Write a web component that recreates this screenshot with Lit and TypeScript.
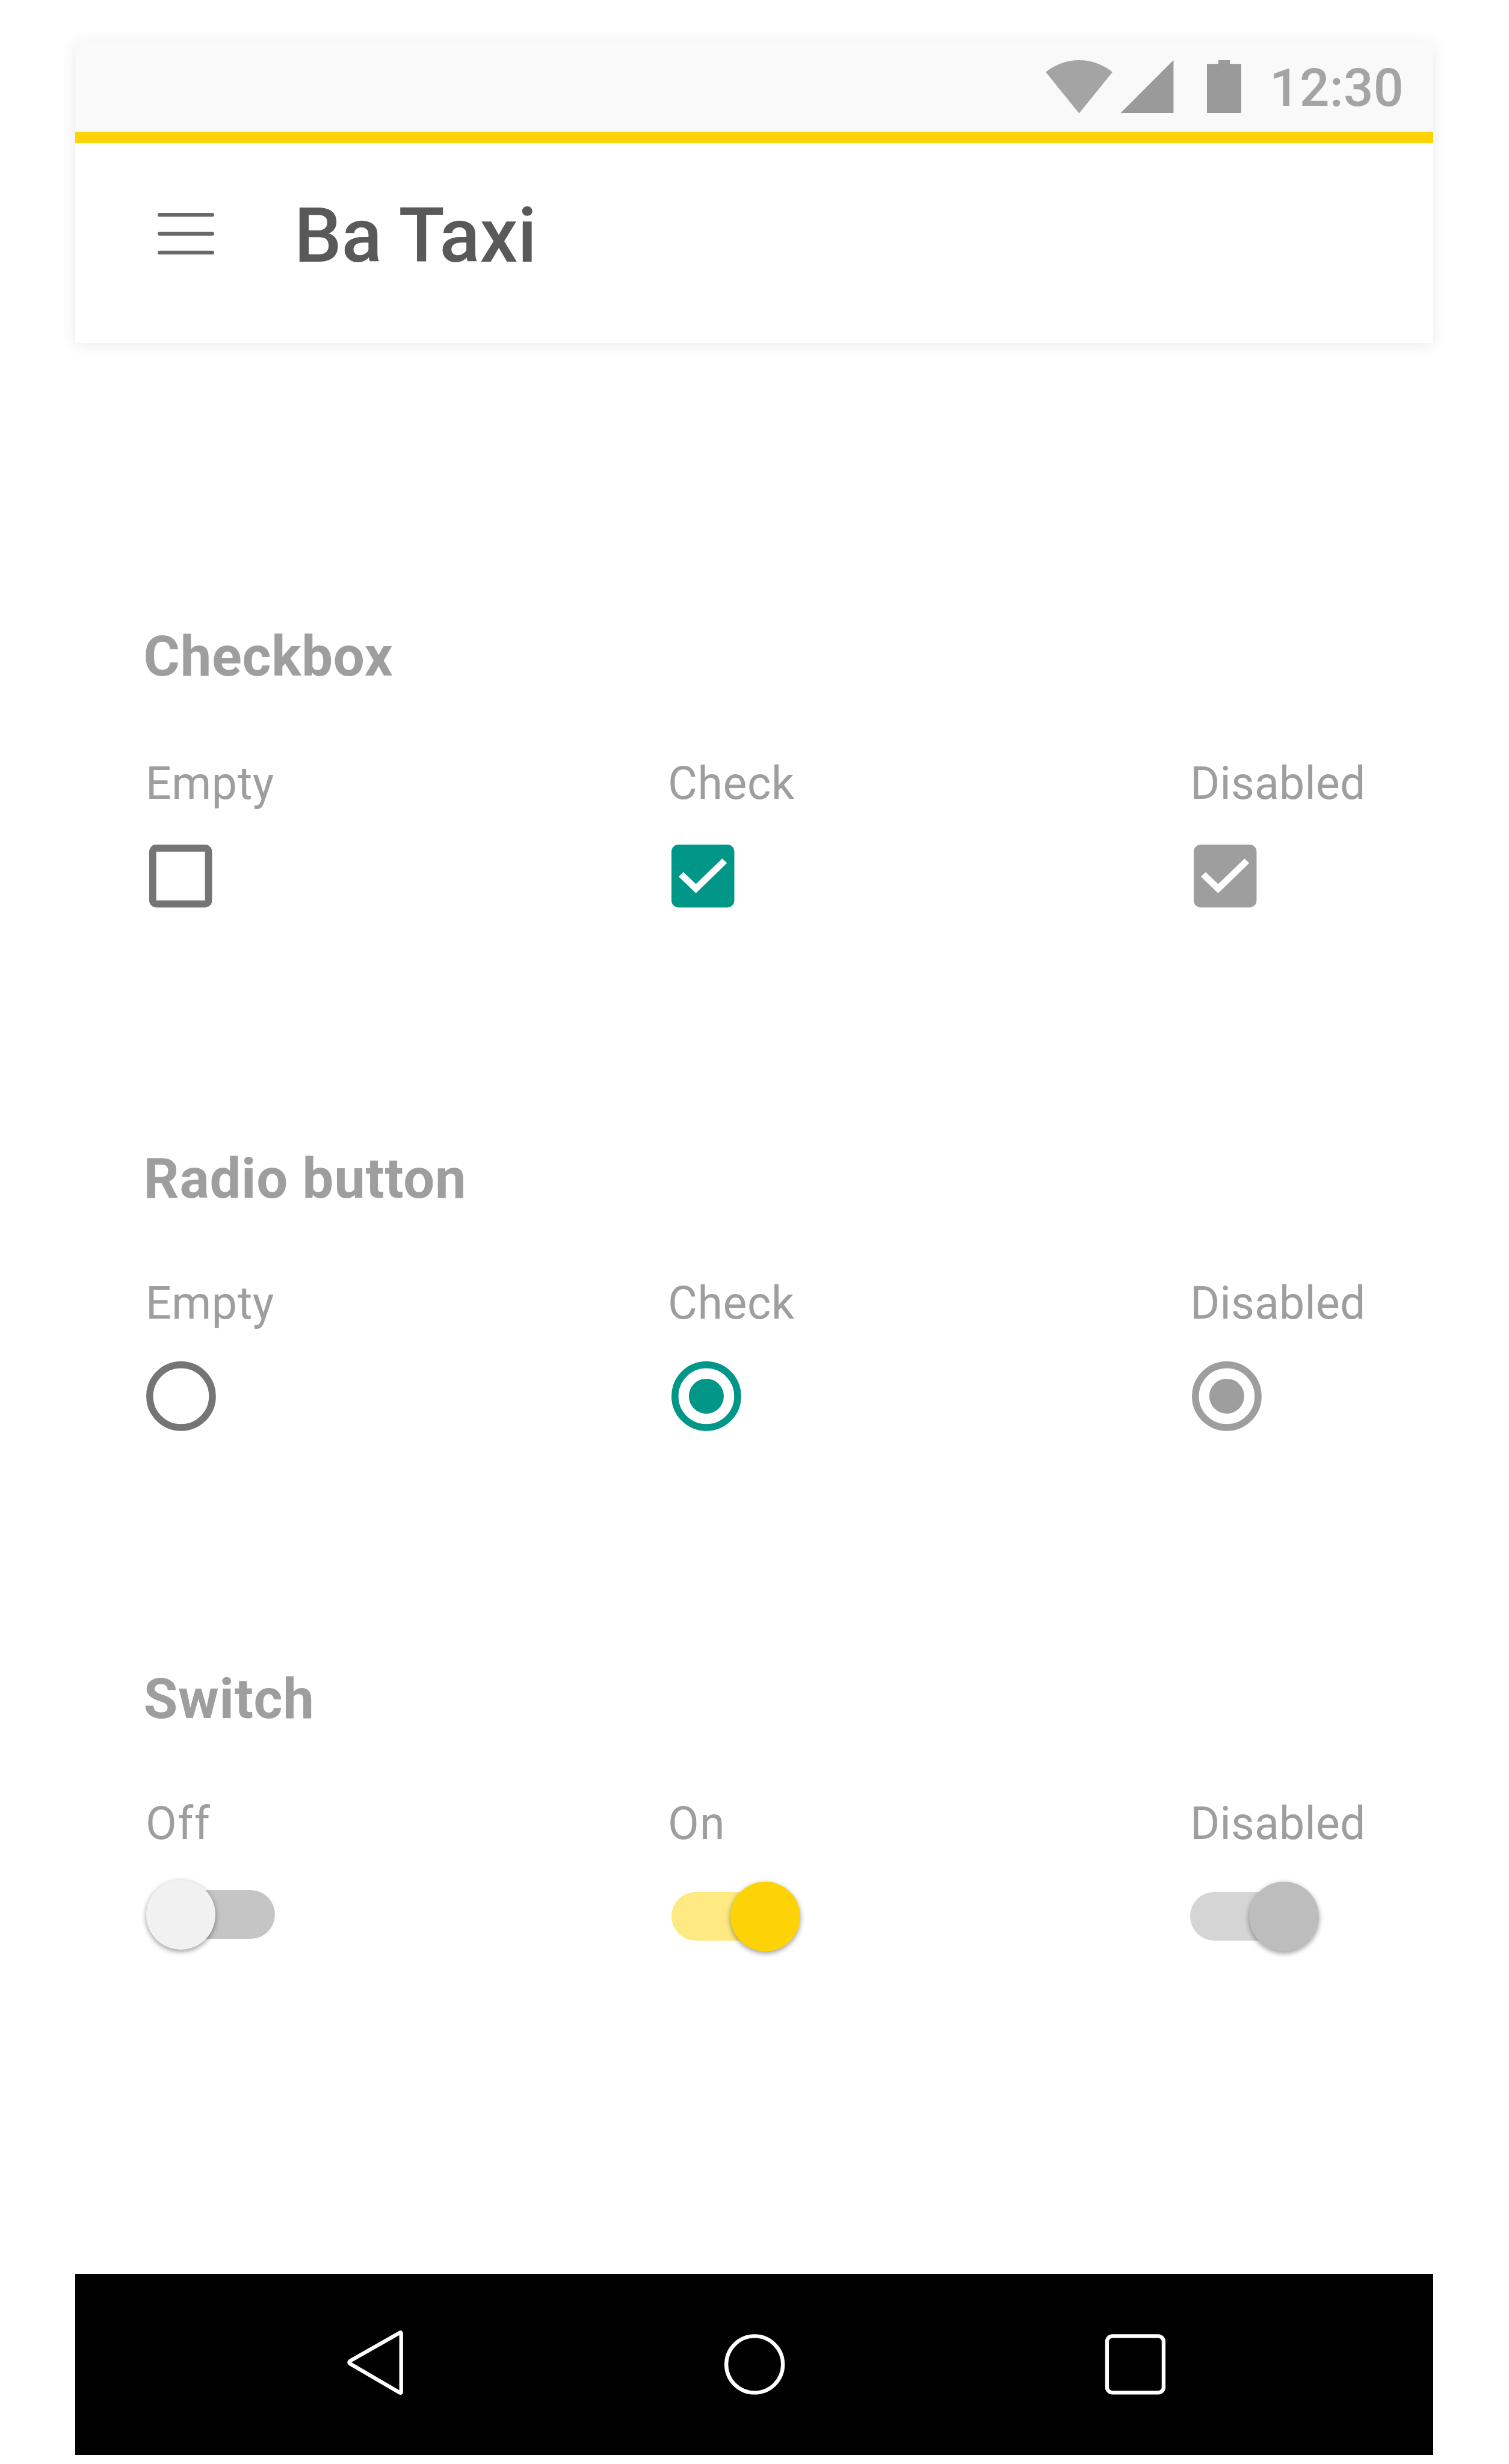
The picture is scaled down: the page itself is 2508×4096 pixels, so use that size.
import { LitElement, html, css, svg, unsafeCSS, nothing } from "lit";
import { customElement, property } from "lit/decorators.js";
import { styleMap } from "lit/directives/style-map.js";

/* Design units to CSS pixels. */
const SCALE = 0.7522;
const px = (n: number) => `${(n * SCALE).toFixed(2)}px`;
const u = (n: number) => unsafeCSS(px(n));

type Kind = "checkbox" | "radio" | "switch";
type Mode = "off" | "on" | "disabled";

interface Option {
  label: string;
  mode: Mode;
  tracking: number;
}

interface Group {
  title: string;
  kind: Kind;
  options: Option[];
}

const GROUPS: Group[] = [
  {
    title: "Checkbox",
    kind: "checkbox",
    options: [
      { label: "Empty", mode: "off", tracking: 0.8 },
      { label: "Check", mode: "on", tracking: 0.8 },
      { label: "Disabled", mode: "disabled", tracking: 0.2 },
    ],
  },
  {
    title: "Radio button",
    kind: "radio",
    options: [
      { label: "Empty", mode: "off", tracking: 0.8 },
      { label: "Check", mode: "on", tracking: 0.8 },
      { label: "Disabled", mode: "disabled", tracking: 0.2 },
    ],
  },
  {
    title: "Switch",
    kind: "switch",
    options: [
      { label: "Off", mode: "off", tracking: 2 },
      { label: "On", mode: "on", tracking: 1.6 },
      { label: "Disabled", mode: "disabled", tracking: 0.2 },
    ],
  },
];

@customElement("status-bar")
export class StatusBar extends LitElement {
  static styles = css`
    :host {
      display: flex;
      justify-content: flex-end;
      height: ${u(200)};
      padding-right: ${u(65.4)};
      background: #f9f9f9;
    }
    svg {
      display: block;
      height: ${u(117.6)};
      margin-top: ${u(41.3)};
    }
    .wifi {
      width: ${u(147.6)};
      margin-right: ${u(17.7)};
      fill: #a4a4a4;
    }
    .signal {
      width: ${u(117.5)};
      margin-right: ${u(74.1)};
      fill: #9a9a9a;
    }
    .battery {
      width: ${u(76)};
      margin-right: ${u(61.9)};
      fill: #9a9a9a;
    }
    .clock {
      margin: ${u(33.5)} ${u(0.8)} 0 0;
      font-size: ${u(116.67)};
      font-weight: 500;
      line-height: ${u(140)};
      color: #a4a4a4;
      white-space: nowrap;
    }
  `;

  render() {
    return html`
      <svg class="wifi" viewBox="0 0 147.6 117.6">
        <path d="M0 26.3A117 117 0 0 1 147.6 26.3L73.8 117.6Z" />
      </svg>
      <svg class="signal" viewBox="0 0 117.5 117.6"><path d="M0 117.6H117.5V0Z" /></svg>
      <svg class="battery" viewBox="0 0 76 117.6">
        <path d="M0 8.3H25.2V0H50.8V8.3H76V117.6H0Z" />
      </svg>
      <span class="clock">12:30</span>
    `;
  }
}

@customElement("app-bar")
export class AppBar extends LitElement {
  @property() heading = "";

  static styles = css`
    :host {
      display: flex;
      height: ${u(441.6)};
      padding-left: ${u(181)};
      background: #fff;
    }
    .menu {
      display: block;
      width: ${u(125)};
      height: ${u(92)};
      margin: ${u(154)} ${u(177)} 0 0;
      stroke: #696969;
      stroke-width: 8.4;
      stroke-linecap: round;
    }
    .heading {
      margin: ${u(106.5)} 0 0;
      font-size: ${u(166.67)};
      font-weight: 500;
      letter-spacing: ${u(-0.5)};
      line-height: ${u(200)};
      color: #595959;
      white-space: nowrap;
    }
  `;

  render() {
    return html`
      <svg class="menu" viewBox="0 0 125 92">
        <path d="M4.2 4.2H120.8M4.2 46H120.8M4.2 87.8H120.8" />
      </svg>
      <h1 class="heading">${this.heading}</h1>
    `;
  }
}

@customElement("option-control")
export class OptionControl extends LitElement {
  @property({ reflect: true }) kind: Kind = "checkbox";
  @property({ reflect: true }) mode: Mode = "off";

  static styles = css`
    :host {
      --tint: #757575;
      display: block;
      margin-top: ${u(68.2)};
    }
    :host([mode="on"]) {
      --tint: #009688;
      margin-left: ${u(8.4)};
    }
    :host([mode="disabled"]) {
      --tint: #9e9e9e;
    }
    :host([kind="checkbox"]) {
      margin-top: ${u(75.2)};
      margin-left: ${u(8.4)};
    }
    :host([kind="radio"][mode="off"]) {
      margin-left: ${u(1.2)};
    }
    :host([kind="radio"][mode="disabled"]) {
      margin-left: ${u(4.3)};
    }
    :host([kind="switch"][mode="off"]) {
      margin-top: ${u(64.4)};
      margin-left: ${u(1)};
    }
    svg {
      display: block;
    }
    .box {
      width: ${u(138.9)};
      height: ${u(138.9)};
    }
    .ring {
      width: ${u(154)};
      height: ${u(154)};
    }
    .fill {
      fill: var(--tint);
    }
    .mark {
      fill: #fff;
    }
    .outline {
      fill: none;
      stroke: var(--tint);
      stroke-width: 15.4;
    }
    .switch {
      display: flex;
      align-items: center;
      justify-content: flex-end;
      position: relative;
      width: ${u(284.4)};
      height: ${u(154)};
    }
    .track {
      width: ${u(260)};
      height: ${u(107.7)};
      border-radius: ${u(54)};
      background: #c5c5c5;
    }
    .thumb {
      position: absolute;
      left: 0;
      top: 0;
      width: ${u(154)};
      height: ${u(154)};
      border-radius: 50%;
      background: #f1f1f1;
      box-shadow: 0 ${u(4)} ${u(12)} rgba(0, 0, 0, 0.4);
    }
    .switch.on,
    .switch.disabled {
      justify-content: flex-start;
    }
    .switch.on .thumb,
    .switch.disabled .thumb {
      left: auto;
      right: 0;
    }
    .on .track {
      background: #fee982;
    }
    .on .thumb {
      background: #fdd306;
    }
    .disabled .track {
      background: #d5d5d5;
    }
    .disabled .thumb {
      background: #bdbdbd;
    }
  `;

  private renderCheckbox() {
    return html`<svg class="box" viewBox="0 0 138.9 138.9">
      ${this.mode === "off"
        ? svg`<path class="fill" fill-rule="evenodd"
            d="M15.4 0H123.5A15.4 15.4 0 0 1 138.9 15.4V123.5A15.4 15.4 0 0 1 123.5 138.9H15.4A15.4 15.4 0 0 1 0 123.5V15.4A15.4 15.4 0 0 1 15.4 0ZM15.6 15.6V123.3H123.3V15.6Z" />`
        : svg`<rect class="fill" width="138.9" height="138.9" rx="15.4" />
            <path class="mark" d="M15.9 70.7L26.3 60.9L54 87.1L112.3 31L122.6 41L54 107.4Z" />`}
    </svg>`;
  }

  private renderRadio() {
    return html`<svg class="ring" viewBox="0 0 154 154">
      <circle class="outline" cx="77" cy="77" r="69.3" />
      ${this.mode === "off" ? nothing : svg`<circle class="fill" cx="77" cy="77" r="38.6" />`}
    </svg>`;
  }

  private renderSwitch() {
    return html`<div class="switch ${this.mode}">
      <div class="track"></div>
      <div class="thumb"></div>
    </div>`;
  }

  render() {
    if (this.kind === "checkbox") return this.renderCheckbox();
    if (this.kind === "radio") return this.renderRadio();
    return this.renderSwitch();
  }
}

@customElement("nav-bar")
export class NavBar extends LitElement {
  static styles = css`
    :host {
      display: flex;
      align-items: flex-start;
      height: ${u(400)};
      padding-left: ${u(598)};
      background: #000;
    }
    svg {
      display: block;
      width: ${u(136)};
      height: ${u(150)};
      margin-top: ${u(121)};
      fill: none;
      stroke: #fff;
      stroke-width: 8.4;
      stroke-linejoin: round;
    }
    .back {
      margin-right: ${u(698)};
    }
    .home {
      margin-right: ${u(706)};
    }
  `;

  render() {
    return html`
      <svg class="back" viewBox="0 0 136 150">
        <path d="M9 71.5Q5 74.5 9 77.5L119 141.5Q122 143 122 139.5V11Q122 7 119 9Z" />
      </svg>
      <svg class="home" viewBox="0 0 136 150"><circle cx="68" cy="79" r="62.5" /></svg>
      <svg class="recent" viewBox="0 0 136 150">
        <rect x="5.2" y="16.5" width="125" height="125" rx="12" />
      </svg>
    `;
  }
}

@customElement("app-root")
export class AppRoot extends LitElement {
  static styles = css`
    :host {
      display: flex;
      flex-direction: column;
      box-sizing: border-box;
      width: 2508px;
      height: 4096px;
      padding: ${u(91.7)} ${u(167)} ${u(20)} ${u(166.7)};
      overflow: hidden;
      background: #fff;
      font-family: Roboto, "Liberation Sans", sans-serif;
    }
    .header {
      flex: none;
      box-shadow: 0 ${u(4)} ${u(33)} rgba(0, 0, 0, 0.09);
    }
    .stripe {
      height: ${u(25)};
      background: #fdd306;
    }
    .content {
      box-sizing: border-box;
      flex: none;
      height: ${u(4267)};
      padding: ${u(619.2)} 0 0 ${u(154.9)};
    }
    .group {
      height: ${u(1150)};
    }
    .group.checkbox {
      height: ${u(1153.3)};
    }
    .title {
      margin: 0 0 ${u(139.5)} ${u(-4.4)};
      font-size: ${u(122.7)};
      font-weight: 700;
      letter-spacing: ${u(0.9)};
      line-height: ${u(150)};
      color: #9e9e9e;
      white-space: nowrap;
    }
    .checkbox .title {
      margin-bottom: ${u(144)};
    }
    .options {
      display: grid;
      grid-template-columns: ${u(1154.1)} ${u(1154.1)} auto;
      align-items: start;
    }
    .label {
      font-size: ${u(100)};
      line-height: ${u(120)};
      color: #9e9e9e;
      white-space: nowrap;
    }
  `;

  render() {
    return html`
      <header class="header">
        <status-bar></status-bar>
        <div class="stripe"></div>
        <app-bar heading="Ba Taxi"></app-bar>
      </header>
      <main class="content">
        ${GROUPS.map(
          (g) => html`<section class="group ${g.kind}">
            <h2 class="title">${g.title}</h2>
            <div class="options">
              ${g.options.map(
                (o) => html`<div class="option">
                  <div class="label" style=${styleMap({ letterSpacing: px(o.tracking) })}>${o.label}</div>
                  <option-control kind=${g.kind} mode=${o.mode}></option-control>
                </div>`
              )}
            </div>
          </section>`
        )}
      </main>
      <nav-bar></nav-bar>
    `;
  }
}
